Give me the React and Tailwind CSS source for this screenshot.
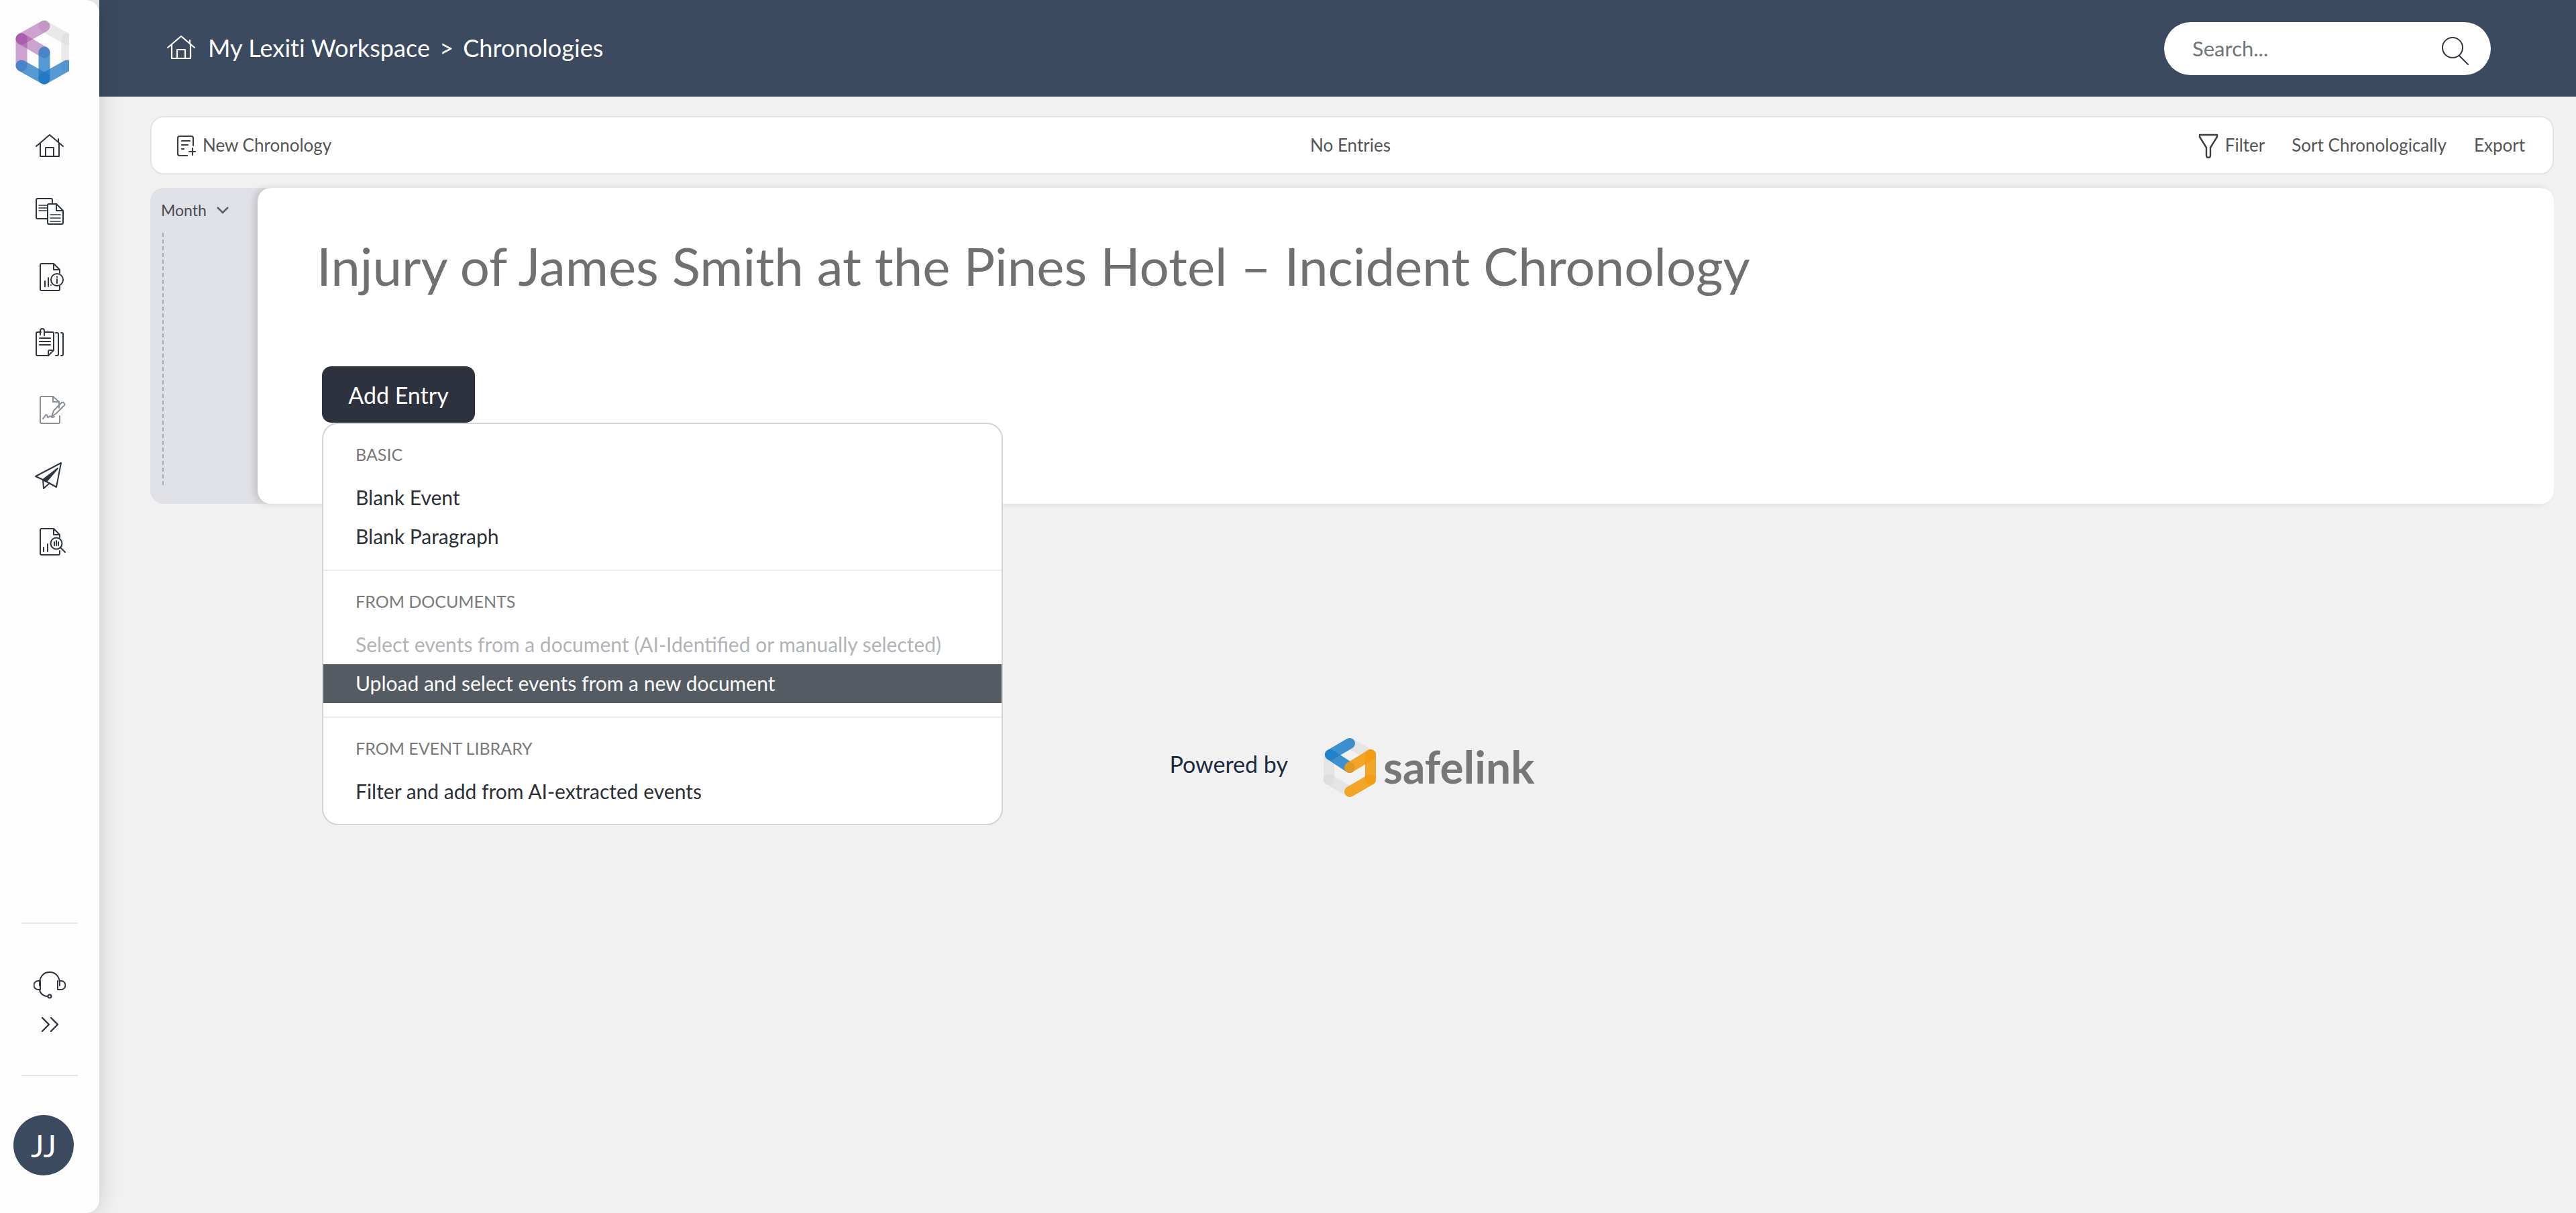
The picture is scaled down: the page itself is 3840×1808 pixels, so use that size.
import { Settings } from 'lucide-react';

const font = { fontFamily: 'Lato, sans-serif' };

// sidebar icons share a 48px box, strokes drawn 1:1 with the reference
function Icon({ children, className = 'text-[#2f3440]', sw = 2 }) {
  return (
    <svg width="48" height="48" viewBox="0 0 48 48" fill="none" stroke="currentColor" strokeWidth={sw} strokeLinecap="round" strokeLinejoin="round" className={className}>
      {children}
    </svg>
  );
}

const HomePaths = () => (
  <>
    <path d="M4 26 24 9l20 17" />
    <path d="M37 15v5" />
    <path d="M10 22v19h28V22" />
    <path d="M18 41V28h12v13" />
  </>
);

const LexitiLogo = () => (
  <svg width="80" height="100" viewBox="0 0 80 100" fill="none" strokeWidth="17" strokeLinecap="round">
    <g stroke="#dcdcdc" strokeOpacity="0.6">
      <path d="M43 9 77 28" />
      <path d="M77 28V68" />
    </g>
    <g stroke="#a0479f" strokeOpacity="0.5">
      <path d="M43 9 9 28" />
      <path d="M9 28 43 48" />
      <path d="M9 28V68" />
    </g>
    <g stroke="#1f78c4" strokeOpacity="0.75">
      <path d="M9 68 43 87" />
      <path d="M43 87 77 68" />
      <path d="M43 48V87" />
    </g>
  </svg>
);

const SafelinkLogo = () => (
  <svg width="80" height="90" viewBox="0 0 80 90" fill="none" strokeWidth="16" strokeLinecap="round" className="shrink-0">
    <g stroke="#d8d8d8" strokeOpacity="0.45">
      <path d="M9 26V63" />
      <path d="M9 63 40 81" />
      <path d="M40 9 71 26" />
    </g>
    <circle cx="9" cy="63" r="8" fill="#dedede" />
    <g stroke="#1f7fc9" strokeOpacity="0.85">
      <path d="M40 9 11 26" />
      <path d="M11 26 40 45" />
    </g>
    <g stroke="#f39c12" strokeOpacity="0.9">
      <path d="M40 45 71 26" />
      <path d="M71 26V63" />
      <path d="M71 63 40 81" />
    </g>
  </svg>
);

const navIcons = [
  <Icon key="home"><HomePaths /></Icon>,
  <Icon key="docs">
    <path d="M28 11V7a2 2 0 0 0-2-2H6a2 2 0 0 0-2 2v26a2 2 0 0 0 2 2h15" />
    <path d="M34 13H23a2 2 0 0 0-2 2v26a2 2 0 0 0 2 2h19a2 2 0 0 0 2-2V23z" />
    <path d="M34 13v10h10" />
    <path d="M8 15h12M8 19h12M8 23h12M25 29h15M25 34h15M25 39h15" strokeWidth="1.5" />
  </Icon>,
  <Icon key="info">
    <path d="M26 36v0M30 4H12a2 2 0 0 0-2 2v36a2 2 0 0 0 2 2h25a2 2 0 0 0 2-2v-5" />
    <path d="M30 4l9 9v5M30 4v9h9" />
    <circle cx="35" cy="28" r="9" />
    <path d="M35 27v6M35 23.5v.5M17 30v8M22 25v13" />
  </Icon>,
  <Icon key="binder">
    <path d="M11 7H6a2 2 0 0 0-2 2v31a2 2 0 0 0 2 2h16l8-8V9a2 2 0 0 0-2-2H16" />
    <path d="M10 11V5a3 3 0 0 1 6 0v7" />
    <path d="M22 42v-6a2 2 0 0 1 2-2h6" />
    <path d="M9 16h16M9 21h16M9 26h16" />
    <path d="M33 8h2a2 2 0 0 1 2 2v30a2 2 0 0 1-2 2h-2M41 8h1a2 2 0 0 1 2 2v30a2 2 0 0 1-2 2h-1" />
  </Icon>,
  <Icon key="sign" className="text-[#8b9096]">
    <path d="M38 22v-9l-9-8H12a2 2 0 0 0-2 2v36a2 2 0 0 0 2 2h25a2 2 0 0 0 2-2v-9" />
    <path d="M29 5v8h9" />
    <path d="M14 38c2-1 3-6 5-6s1 5 3 4 2-3 4-1 3 1 5 0" />
    <path d="M27 35l3-9 12-12a3 3 0 0 1 4 4L34 30z" />
  </Icon>,
  <Icon key="plane">
    <path d="M3 25 41 5l-7 36-20-11z" />
    <path d="M14 30l1 13 9-8" />
    <path d="M14 30 36 13 19 33z" fill="currentColor" />
  </Icon>,
  <Icon key="search">
    <path d="M30 5H12a2 2 0 0 0-2 2v35a2 2 0 0 0 2 2h25a2 2 0 0 0 2-2v-4" />
    <path d="M30 5l9 9v4M30 5v9h9" />
    <circle cx="34" cy="27" r="8.5" />
    <path d="M40 33l7 7" />
    <path d="M31 25v5M34 23v7M37 25v5M15 33v6M21 28v11" />
  </Icon>,
];

function Sidebar() {
  return (
    <aside className="relative z-10 w-[148px] h-[1808px] shrink-0 flex flex-col bg-[#fdfdfd] rounded-r-[20px] shadow-[0_0_34px_rgba(0,0,0,0.16)]">
      <div className="h-[167px] pt-[30px] pl-[23px]">
        <LexitiLogo />
      </div>
      {navIcons.map((icon, i) => (
        <div key={i} className="h-[98.5px] flex items-center justify-center">
          {icon}
        </div>
      ))}
      <div className="mt-auto mx-[32px] h-[2px] bg-[#e6e6e6]" />
      <div className="h-[144px] mt-[20px] flex items-center justify-center">
        <Icon>
          <path d="M9 24c-1-13 6-20 15-20s16 7 15 20" />
          <path d="M9 17H7a5 5 0 0 0 0 13h3V17zM39 17h2a5 5 0 0 1 0 13h-5V17" />
          <path d="M9 30c1 7 7 10 12 10" />
          <circle cx="24" cy="40" r="2.5" />
        </Icon>
      </div>
      <div className="h-[56px] -mt-[42px] flex items-center justify-center">
        <Icon sw={2.4}>
          <path d="M13 14l10 10-10 10M26 14l10 10-10 10" />
        </Icon>
      </div>
      <div className="mt-[47px] mx-[32px] h-[2px] bg-[#e6e6e6]" />
      <div
        className="mt-[58px] mb-[56px] ml-[20px] w-[90px] h-[90px] rounded-full bg-[#3b4a5e] flex items-center justify-center text-white text-[46px]"
        style={font}
      >
        JJ
      </div>
    </aside>
  );
}

function TopBar() {
  return (
    <header className="h-[144px] bg-[#3b4a5e] flex items-center justify-between pl-[100px] pr-[127px] text-white">
      <div className="flex items-center">
        <svg width="44" height="40" viewBox="0 0 44 40" fill="none" stroke="#fff" strokeWidth="2.2" strokeLinecap="round" strokeLinejoin="round" className="-mt-[3px]">
          <path d="M2 20 22 3l20 17" />
          <path d="M35 9v5" />
          <path d="M8 16v20h28V16" />
          <path d="M16 36V23h12v13" />
        </svg>
        <span className="ml-[18px] text-[36px] tracking-[0.1px] -mt-[2px]" style={font}>
          My Lexiti Workspace<span className="mx-[14px]">&gt;</span>Chronologies
        </span>
      </div>
      <div className="w-[487px] h-[79px] rounded-full bg-white flex items-center justify-between pl-[42px] pr-[30px]">
        <span className="text-[31px] text-[#6f757b]" style={font}>Search...</span>
        <svg width="44" height="44" viewBox="0 0 44 44" fill="none" stroke="#2f3440" strokeWidth="2" strokeLinecap="round" className="mt-[8px]">
          <circle cx="17" cy="17" r="15" />
          <path d="M27 29l13 13" />
        </svg>
      </div>
    </header>
  );
}

function Toolbar() {
  return (
    <div className="h-[87px] grid grid-cols-3 items-center rounded-[20px] bg-white border-2 border-[#e4e4e4] pl-[36px] pr-[41px] text-[26px] text-[#555]" style={font}>
      <div className="flex items-center gap-[10px]">
        <svg width="30" height="32" viewBox="0 0 30 32" fill="none" stroke="#3a3d42" strokeWidth="2.2" strokeLinecap="round" strokeLinejoin="round">
          <path d="M26 16V5a3 3 0 0 0-3-3H6a3 3 0 0 0-3 3v23a3 3 0 0 0 3 3h11" />
          <path d="M9 9h12M9 15h9M9 21h3" />
          <path d="M25 20v10M20 25h9" />
        </svg>
        <span>New Chronology</span>
      </div>
      <div className="text-center">No Entries</div>
      <div className="flex items-center justify-end">
        <svg width="30" height="38" viewBox="0 0 30 38" fill="none" stroke="#3a3d42" strokeWidth="2.4" strokeLinejoin="round" className="mr-[10px]">
          <path d="M2 3h26v3L18 22v12a3 3 0 0 1-6 0V22L2 6z" />
        </svg>
        <span>Filter</span>
        <span className="ml-[40px]">Sort Chronologically</span>
        <span className="ml-[41px]">Export</span>
      </div>
    </div>
  );
}

function MenuLabel({ children }) {
  return <div className="h-[40px] flex items-center px-[48px] text-[25px] text-[#7a7a7a] uppercase">{children}</div>;
}

function MenuItem({ children, className = 'text-[#2b3037]' }) {
  return <div className={`h-[58.5px] flex items-center px-[48px] text-[30px] ${className}`}>{children}</div>;
}

function AddEntryMenu() {
  return (
    <div className="absolute left-0 top-[84px] z-20 w-[1015px] h-[600px] bg-white rounded-[24px] border-2 border-[#d4d4d4] overflow-hidden" style={font}>
      <div className="pt-[26px] h-[219px] border-b-2 border-[#ececec]">
        <MenuLabel>Basic</MenuLabel>
        <div className="mt-[14px]">
          <MenuItem>Blank Event</MenuItem>
          <MenuItem>Blank Paragraph</MenuItem>
        </div>
      </div>
      <div className="pt-[26px] h-[219px] border-b-2 border-[#ececec]">
        <MenuLabel>From Documents</MenuLabel>
        <div className="mt-[14px]">
          <MenuItem className="text-[#b1b4b8]">Select events from a document (AI-Identified or manually selected)</MenuItem>
          <MenuItem className="bg-[#555b63] text-white">Upload and select events from a new document</MenuItem>
        </div>
      </div>
      <div className="pt-[26px]">
        <MenuLabel>From Event Library</MenuLabel>
        <div className="mt-[14px]">
          <MenuItem>Filter and add from AI-extracted events</MenuItem>
        </div>
      </div>
    </div>
  );
}

function Chronology() {
  return (
    <div className="mt-[20px] h-[471px] flex rounded-[20px] bg-[#e0e1e6]">
      <div className="w-[160px] shrink-0 pl-[16px] pt-[16px]" style={font}>
        <div className="flex items-center text-[23px] text-[#474b53]">
          <span>Month</span>
          <svg width="20" height="12" viewBox="0 0 20 12" fill="none" stroke="#5d6066" strokeWidth="2.6" className="ml-[14px]">
            <path d="M2 2l8 8 8-8" />
          </svg>
        </div>
        <div className="ml-[2px] mt-[16px] h-[376px] border-l-2 border-dashed border-[#a9abb0]" />
      </div>
      <div className="flex-1 bg-white rounded-[20px] shadow-[-6px_0_10px_rgba(0,0,0,0.12)] pl-[88px] pt-[68px]">
        <h1 className="text-[78px] leading-[96px] text-[#707070]" style={font}>
          Injury of James Smith at the Pines Hotel – Incident Chronology
        </h1>
        <div className="relative ml-[8px] mt-[102px] w-[228px]">
          <button className="w-[228px] h-[84px] rounded-[14px] bg-[#2d323e] text-white text-[34px]" style={font}>
            Add Entry
          </button>
          <AddEntryMenu />
        </div>
      </div>
    </div>
  );
}

function PoweredBy() {
  return (
    <div className="mt-[348px] flex items-center justify-center" style={font}>
      <span className="text-[34px] text-[#1c2b3f] -mt-[12px]">Powered by</span>
      <div className="ml-[52px]">
        <SafelinkLogo />
      </div>
      <span className="relative ml-[10px] text-[66px] leading-none font-bold text-[#777] -mt-[2px]">
        safelink
      </span>
    </div>
  );
}

export default function App() {
  return (
    <div className="w-[3840px] h-[1808px] overflow-hidden flex bg-[#f1f1f1]">
      <Sidebar />
      <main className="flex-1 -ml-[24px]">
        <div className="pl-[24px]">
          <TopBar />
        </div>
        <div className="pl-[100px] pr-[33px] pt-[29px]">
          <Toolbar />
          <Chronology />
          <PoweredBy />
        </div>
      </main>
    </div>
  );
}
